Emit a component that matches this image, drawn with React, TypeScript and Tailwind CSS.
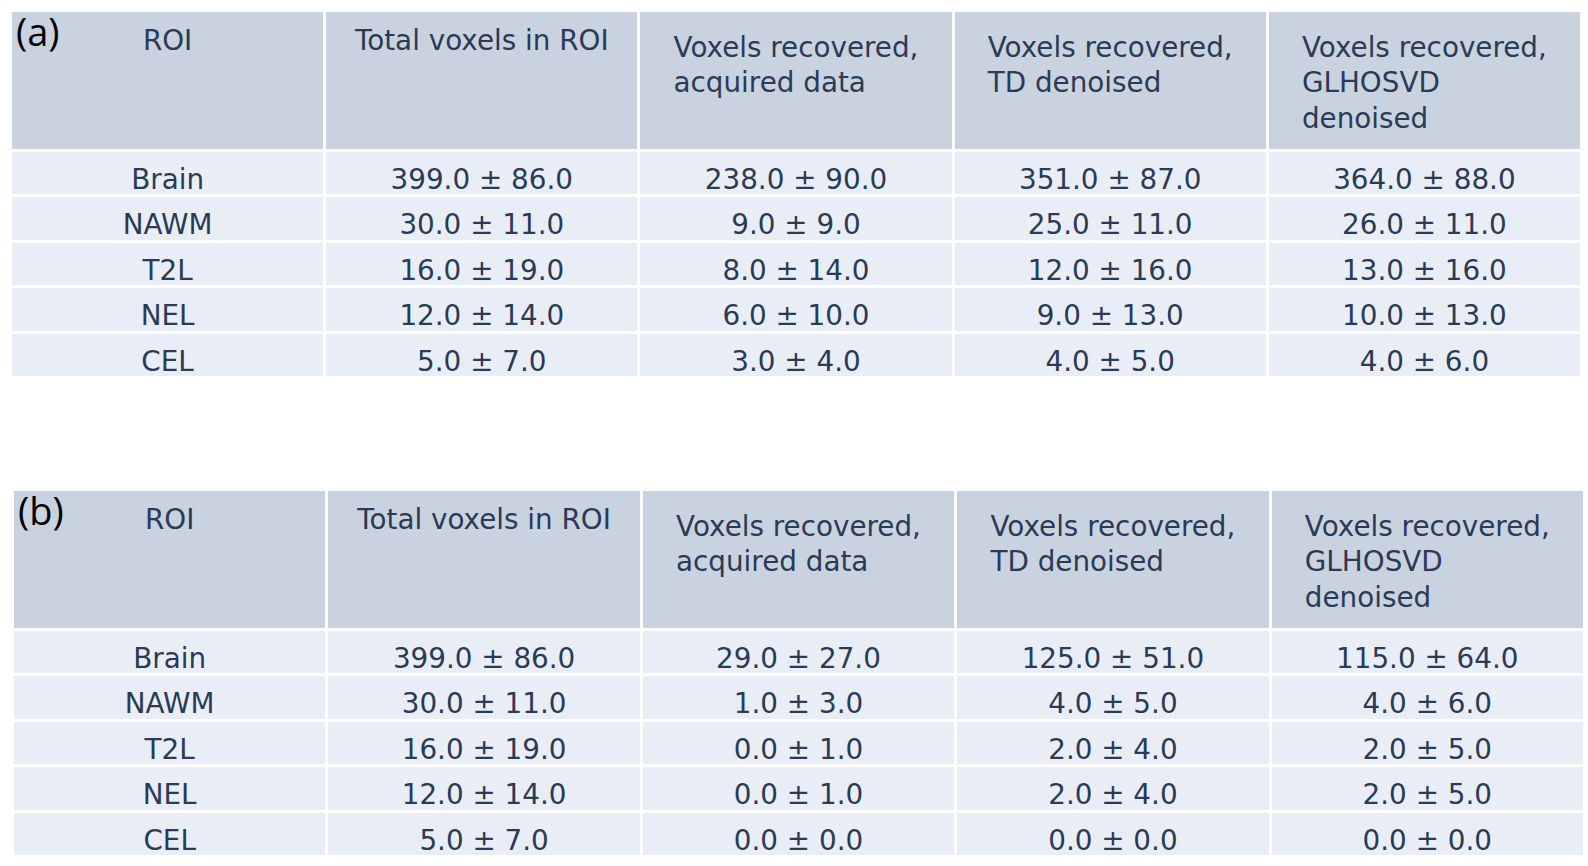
import React from "react";

type Row = [string, string, string, string, string];

const rowsA: Row[] = [
  ["Brain", "399.0 ± 86.0", "238.0 ± 90.0", "351.0 ± 87.0", "364.0 ± 88.0"],
  ["NAWM", "30.0 ± 11.0", "9.0 ± 9.0", "25.0 ± 11.0", "26.0 ± 11.0"],
  ["T2L", "16.0 ± 19.0", "8.0 ± 14.0", "12.0 ± 16.0", "13.0 ± 16.0"],
  ["NEL", "12.0 ± 14.0", "6.0 ± 10.0", "9.0 ± 13.0", "10.0 ± 13.0"],
  ["CEL", "5.0 ± 7.0", "3.0 ± 4.0", "4.0 ± 5.0", "4.0 ± 6.0"],
];

const rowsB: Row[] = [
  ["Brain", "399.0 ± 86.0", "29.0 ± 27.0", "125.0 ± 51.0", "115.0 ± 64.0"],
  ["NAWM", "30.0 ± 11.0", "1.0 ± 3.0", "4.0 ± 5.0", "4.0 ± 6.0"],
  ["T2L", "16.0 ± 19.0", "0.0 ± 1.0", "2.0 ± 4.0", "2.0 ± 5.0"],
  ["NEL", "12.0 ± 14.0", "0.0 ± 1.0", "2.0 ± 4.0", "2.0 ± 5.0"],
  ["CEL", "5.0 ± 7.0", "0.0 ± 0.0", "0.0 ± 0.0", "0.0 ± 0.0"],
];

const multiHeaders: string[][] = [
  ["Voxels recovered,", "acquired data"],
  ["Voxels recovered,", "TD denoised"],
  ["Voxels recovered,", "GLHOSVD", "denoised"],
];

function Table({ label, rows, className }: { label: string; rows: Row[]; className: string }) {
  return (
    <div className={`relative ${className}`}>
      <div className="grid h-[364px] grid-cols-5 grid-rows-[137px_repeat(5,1fr)] gap-[3px] bg-white font-['DejaVu_Sans',sans-serif] text-[27.8px] text-[#2b3a55]">
        <div className="bg-[#c9d3e0] pt-[15px] text-center leading-none">ROI</div>
        <div className="bg-[#c9d3e0] pt-[15px] text-center leading-none">Total voxels in ROI</div>
        {multiHeaders.map((lines, i) => (
          <div key={i} className="flex justify-center bg-[#c9d3e0] pt-[18px]">
            <div className="text-left leading-[35.4px]">
              {lines.map((l, j) => (
                <div key={j} className="whitespace-nowrap">
                  {l}
                </div>
              ))}
            </div>
          </div>
        ))}
        {rows.map((r, ri) =>
          r.map((c, ci) => (
            <div
              key={`${ri}-${ci}`}
              className="whitespace-nowrap bg-[#e9eef6] pt-[14px] text-center leading-none"
            >
              {c}
            </div>
          ))
        )}
      </div>
      <div className="absolute left-[4px] top-[0px] font-['Open_Sans',sans-serif] text-[38px] font-medium leading-none text-black">
        {label}
      </div>
    </div>
  );
}

export default function App() {
  return (
    <div className="min-h-[866px] w-[1588px] bg-white pt-[12px]">
      <Table label="(a)" rows={rowsA} className="ml-[12px] w-[1568px]" />
      <Table label="(b)" rows={rowsB} className="ml-[14px] mt-[115px] w-[1569px]" />
    </div>
  );
}
